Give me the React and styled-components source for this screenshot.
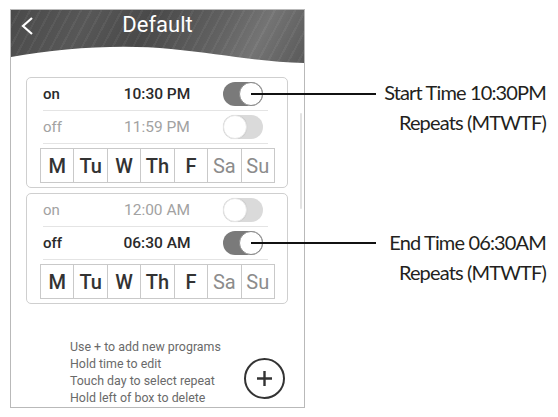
import React from "react";
import styled, { createGlobalStyle } from "styled-components";

const programs = [
  {
    id: "p1",
    rows: [
      { label: "on", time: "10:30 PM", enabled: true, callout: true },
      { label: "off", time: "11:59 PM", enabled: false },
    ],
  },
  {
    id: "p2",
    rows: [
      { label: "on", time: "12:00 AM", enabled: false },
      { label: "off", time: "06:30 AM", enabled: true, callout: true },
    ],
  },
];

const days = [
  { name: "M", on: true },
  { name: "Tu", on: true },
  { name: "W", on: true },
  { name: "Th", on: true },
  { name: "F", on: true },
  { name: "Sa", on: false },
  { name: "Su", on: false },
];

const notes = [
  { title: "Start Time 10:30PM", sub: "Repeats (MTWTF)" },
  { title: "End Time 06:30AM", sub: "Repeats (MTWTF)" },
];

const help = [
  "Use + to add new programs",
  "Hold time to edit",
  "Touch day to select repeat",
  "Hold left of box to delete",
];

const GlobalStyle = createGlobalStyle`
  html, body {
    margin: 0;
    padding: 0;
    background: #fff;
  }
  body {
    font-family: Roboto, "Liberation Sans", sans-serif;
  }
  * {
    box-sizing: border-box;
  }
`;

const Page = styled.div`
  width: 558px;
  height: 417px;
  display: flex;
  align-items: flex-start;
  padding: 9px 12px 0 10px;
`;

const Phone = styled.div`
  position: relative;
  flex-shrink: 0;
  width: 295px;
  height: 399px;
  border: 1px solid #b9b9b9;
  display: flex;
  flex-direction: column;
  background: #fff;
`;

const Header = styled.header`
  position: relative;
  height: 53px;
  display: grid;
  grid-template-columns: 40px 1fr 40px;
  align-items: start;
  overflow: hidden;
  background:
    repeating-linear-gradient(
      118deg,
      rgba(255, 255, 255, 0) 0 7px,
      rgba(255, 255, 255, 0.05) 7px 9px
    ),
    linear-gradient(
      118deg,
      #4a4a4a 0%,
      #575757 25%,
      #494949 45%,
      #636363 70%,
      #747474 82%,
      #595959 100%
    );
`;

const Wave = styled.svg`
  position: absolute;
  left: 0;
  bottom: 0;
  width: 100%;
  height: 100%;
`;

const Back = styled.span`
  padding: 7px 0 0 10px;
  display: flex;
`;

const Title = styled.h1`
  margin: 0;
  padding-top: 1px;
  text-align: center;
  color: #fff;
  font-size: 22px;
  font-weight: 400;
  line-height: 28px;
`;

const List = styled.div`
  display: flex;
  flex-direction: column;
  gap: 5px;
  padding: 14px 16px 0 15px;
`;

const Card = styled.section`
  border: 1px solid #cfcfcf;
  border-radius: 5px;
  padding: 0 12px 4px 13px;
`;

const Row = styled.div`
  height: 33px;
  margin: 0 7px 0 3px;
  border-bottom: 1px solid #e4e4e4;
  display: grid;
  grid-template-columns: 1fr auto 1fr;
  align-items: center;
  font-size: 15px;
  font-weight: ${(p) => (p.$active ? 500 : 400)};
  color: ${(p) => (p.$active ? "#2a2a2a" : "#a2a2a2")};
`;

const Time = styled.span`
  padding-left: 3px;
  font-size: 15.5px;
`;

const Toggle = styled.span`
  position: relative;
  justify-self: end;
  margin-right: 5px;
  width: 40px;
  height: 24px;
  border-radius: 12px;
  background: ${(p) => (p.$on ? "#7a7a7a" : "#dadada")};

  &::before {
    content: "";
    position: absolute;
    top: 0;
    left: ${(p) => (p.$on ? "16px" : "0")};
    width: 24px;
    height: 24px;
    border-radius: 50%;
    background: #fff;
    border: 1.5px solid ${(p) => (p.$on ? "#8a8a8a" : "#e6e6e6")};
    box-shadow: ${(p) => (p.$on ? "none" : "0 0 1px rgba(0,0,0,0.15)")};
    box-sizing: border-box;
  }

  &::after {
    content: "";
    display: ${(p) => (p.$callout ? "block" : "none")};
    position: absolute;
    left: 28px;
    top: 11px;
    width: 125px;
    height: 1.5px;
    background: #111;
    z-index: 2;
  }
`;

const Days = styled.div`
  margin-top: 4px;
  height: 35px;
  display: grid;
  grid-template-columns: repeat(7, 1fr);
  border-top: 1px solid #c9c9c9;
  border-left: 1px solid #c9c9c9;
`;

const Day = styled.span`
  display: grid;
  place-items: center;
  border-right: 1px solid #c9c9c9;
  border-bottom: 1px solid #c9c9c9;
  font-size: 20px;
  font-weight: ${(p) => (p.$on ? 500 : 400)};
  color: ${(p) => (p.$on ? "#333" : "#8c8c8c")};
`;

const ScrollThumb = styled.span`
  position: absolute;
  right: 2px;
  top: 103px;
  width: 2px;
  height: 96px;
  border-radius: 1px;
  background: #e2e2e2;
`;

const Footer = styled.footer`
  margin-top: auto;
  display: flex;
  align-items: flex-end;
  padding: 0 19px 1.5px 59px;
`;

const Help = styled.div`
  font-size: 12.4px;
  line-height: 17px;
  color: #6a6a6a;
`;

const AddButton = styled.span`
  margin-left: auto;
  margin-bottom: 7px;
  width: 41px;
  height: 41px;
  border: 2px solid #333;
  border-radius: 50%;
  display: grid;
  place-items: center;
`;

const Notes = styled.div`
  flex: 1;
  display: flex;
  flex-direction: column;
  align-items: flex-end;
  padding-top: 68px;
  font-family: Lato, "Open Sans", sans-serif;
  font-size: 20px;
  line-height: 30px;
  letter-spacing: -0.85px;
  color: #231f20;
  text-align: right;
`;

const Note = styled.div`
  & + & {
    margin-top: 90px;
  }
`;

const Chevron = () => (
  <svg width="13" height="18" viewBox="0 0 13 18">
    <polyline
      points="11,1 2,9 11,17"
      fill="none"
      stroke="#fff"
      strokeWidth="2.2"
      strokeLinejoin="miter"
    />
  </svg>
);

const Plus = () => (
  <svg width="17" height="17" viewBox="0 0 17 17">
    <path d="M8.5 1 V16 M1 8.5 H16" stroke="#333" strokeWidth="2.4" />
  </svg>
);

const Program = ({ program }) => (
  <Card>
    {program.rows.map((row) => (
      <Row key={row.label} $active={row.enabled}>
        <span>{row.label}</span>
        <Time>{row.time}</Time>
        <Toggle $on={row.enabled} $callout={row.callout} />
      </Row>
    ))}
    <Days>
      {days.map((d) => (
        <Day key={d.name} $on={d.on}>
          {d.name}
        </Day>
      ))}
    </Days>
  </Card>
);

export default function App() {
  return (
    <>
      <GlobalStyle />
      <Page>
        <Phone>
          <Header>
            <Wave viewBox="0 0 293 53" preserveAspectRatio="none">
              <path
                d="M0 47 C50 38 110 34 160 39 C210 44 250 52 293 53 L293 53 L0 53 Z"
                fill="#fff"
              />
            </Wave>
            <Back>
              <Chevron />
            </Back>
            <Title>Default</Title>
          </Header>
          <List>
            {programs.map((p) => (
              <Program key={p.id} program={p} />
            ))}
          </List>
          <ScrollThumb />
          <Footer>
            <Help>
              {help.map((line) => (
                <div key={line}>{line}</div>
              ))}
            </Help>
            <AddButton>
              <Plus />
            </AddButton>
          </Footer>
        </Phone>
        <Notes>
          {notes.map((n) => (
            <Note key={n.title}>
              <div>{n.title}</div>
              <div>{n.sub}</div>
            </Note>
          ))}
        </Notes>
      </Page>
    </>
  );
}
